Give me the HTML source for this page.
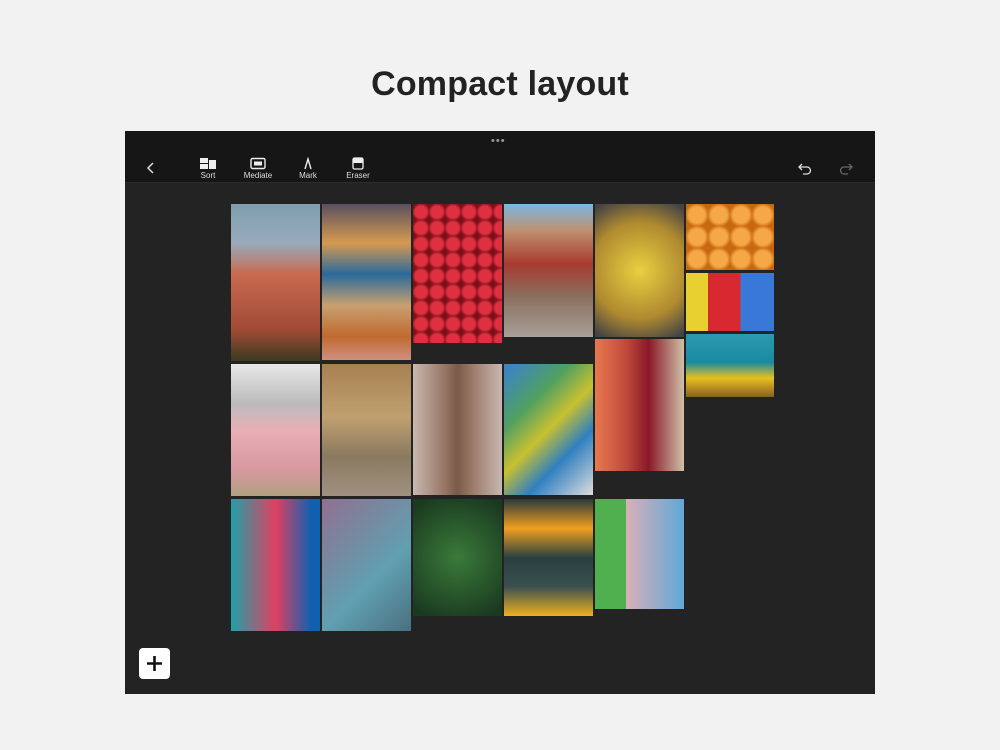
<!DOCTYPE html>
<html><head><meta charset="utf-8"><style>
body{margin:0;width:1000px;height:750px;background:#f2f2f2;position:relative;overflow:hidden;font-family:"Liberation Sans",sans-serif}
h1{position:absolute;top:65px;left:0;width:1000px;text-align:center;margin:0;font-size:34px;font-weight:bold;color:#222;letter-spacing:0.2px}
#app{position:absolute;left:125px;top:131px;width:750px;height:563px;background:#232323}
#bar{position:absolute;left:0;top:0;width:750px;height:51px;background:#161616;border-bottom:1px solid #2c2c2c}
.t{position:absolute;top:26px;color:#ddd;font-size:8px;text-align:center;width:40px}
.t svg{display:block;margin:0 auto 1px}
.p{position:absolute}
</style></head><body>
<h1>Compact layout</h1>
<div id="app">
<div id="bar">
<div style="position:absolute;left:366px;top:4px;color:#999;font-size:11px;letter-spacing:1px">•••</div>
<svg style="position:absolute;left:21px;top:30px" width="10" height="14"><path d="M7 2L2 7L7 12" stroke="#ddd" stroke-width="1.5" fill="none"/></svg>
<div class="t" style="left:63px"><svg width="18" height="13"><rect x="1" y="1" width="8" height="5" fill="#eee"/><rect x="1" y="7" width="8" height="5" fill="#eee"/><rect x="10" y="3" width="7" height="9" fill="#eee"/></svg>Sort</div>
<div class="t" style="left:113px"><svg width="18" height="13"><rect x="2" y="1.5" width="14" height="10" rx="1.5" stroke="#eee" stroke-width="1.4" fill="none"/><rect x="5" y="4.5" width="8" height="4" fill="#eee"/></svg>Mediate</div>
<div class="t" style="left:163px"><svg width="18" height="13"><path d="M6 12L9 2L12 12" stroke="#eee" stroke-width="1.4" fill="none"/></svg>Mark</div>
<div class="t" style="left:213px"><svg width="18" height="13"><rect x="4" y="1" width="10" height="11" rx="1.5" stroke="#eee" stroke-width="1.3" fill="none"/><rect x="4" y="1" width="10" height="5" fill="#eee"/></svg>Eraser</div>
<svg style="position:absolute;left:673px;top:30px" width="14" height="14"><path d="M4 3L1 6L4 9M1 6H9A3.5 3.5 0 0 1 9 13H5" stroke="#ddd" stroke-width="1.3" fill="none"/></svg>
<svg style="position:absolute;left:714px;top:30px" width="14" height="14"><path d="M10 3L13 6L10 9M13 6H5A3.5 3.5 0 0 0 5 13H9" stroke="#666" stroke-width="1.3" fill="none"/></svg>
</div>
<div style="position:absolute;left:14px;top:517px;width:31px;height:31px;background:#fff;border-radius:4px"><svg width="31" height="31"><path d="M15.5 8V23M8 15.5H23" stroke="#111" stroke-width="2.6"/></svg></div>
</div>
<div class="p" style="left:231px;top:204px;width:89px;height:157px;background:linear-gradient(180deg,#7f9fae 0%,#9ab 25%,#c86a4e 45%,#a14a36 80%,#3a3a20 100%)"></div>
<div class="p" style="left:322px;top:204px;width:89px;height:156px;background:linear-gradient(180deg,#5a5060 0%,#d69a50 25%,#2a6a9a 45%,#c8a070 65%,#c06a30 85%,#d09080 100%)"></div>
<div class="p" style="left:413px;top:204px;width:89px;height:139px;background:radial-gradient(circle at 50% 50%,#e03040 0 6px,#7a1018 9px) 0 0/16px 16px,#a01820"></div>
<div class="p" style="left:504px;top:204px;width:89px;height:133px;background:linear-gradient(180deg,#7ab8e0 0%,#c09070 20%,#a83a30 45%,#8a7060 70%,#a8a098 100%)"></div>
<div class="p" style="left:595px;top:204px;width:89px;height:133px;background:radial-gradient(circle at 50% 50%,#e8d040,#b08a30 60%,#444 95%)"></div>
<div class="p" style="left:686px;top:204px;width:88px;height:66px;background:radial-gradient(circle,#f5a845 0 8px,#c86810 12px) 0 0/22px 22px"></div>
<div class="p" style="left:686px;top:273px;width:88px;height:58px;background:linear-gradient(90deg,#e8d030 0 25%,#d82830 25% 62%,#3a78d8 62%)"></div>
<div class="p" style="left:686px;top:334px;width:88px;height:63px;background:linear-gradient(180deg,#2a9ab0 0%,#1a8aa0 45%,#e8c020 70%,#8a6020 100%)"></div>
<div class="p" style="left:231px;top:364px;width:89px;height:132px;background:linear-gradient(180deg,#e8e8e8 0%,#bbb 30%,#e8b0b8 50%,#d898a0 80%,#b0a080 100%)"></div>
<div class="p" style="left:322px;top:364px;width:89px;height:132px;background:linear-gradient(180deg,#a88050 0%,#c0a070 40%,#8a7a60 70%,#a09080 100%)"></div>
<div class="p" style="left:413px;top:364px;width:89px;height:131px;background:linear-gradient(90deg,#c8b8b0 0%,#a08070 30%,#7a5a48 50%,#a08070 70%,#c8b8b0 100%)"></div>
<div class="p" style="left:504px;top:364px;width:89px;height:131px;background:linear-gradient(135deg,#3a80d0 0%,#50a060 30%,#c8c030 50%,#3080c0 70%,#ddd 100%)"></div>
<div class="p" style="left:595px;top:339px;width:89px;height:132px;background:linear-gradient(90deg,#e87850 0%,#c04a3a 35%,#8a1828 60%,#d0c0a8 100%)"></div>
<div class="p" style="left:231px;top:499px;width:89px;height:132px;background:linear-gradient(90deg,#20a0a8 0%,#e04060 50%,#1060b0 90%)"></div>
<div class="p" style="left:322px;top:499px;width:89px;height:132px;background:linear-gradient(135deg,#907090,#60a0b0 60%,#4a7080)"></div>
<div class="p" style="left:413px;top:499px;width:89px;height:117px;background:radial-gradient(circle,#3a7a3a,#1a3a20 90%)"></div>
<div class="p" style="left:504px;top:499px;width:89px;height:117px;background:linear-gradient(180deg,#2a3a3a 0%,#f0a020 25%,#2a4040 50%,#3a5050 75%,#f0b020 100%)"></div>
<div class="p" style="left:595px;top:499px;width:89px;height:110px;background:linear-gradient(90deg,#50b050 0 35%,#d8b0b8 35%,#60a8d8 100%)"></div>
</body></html>
